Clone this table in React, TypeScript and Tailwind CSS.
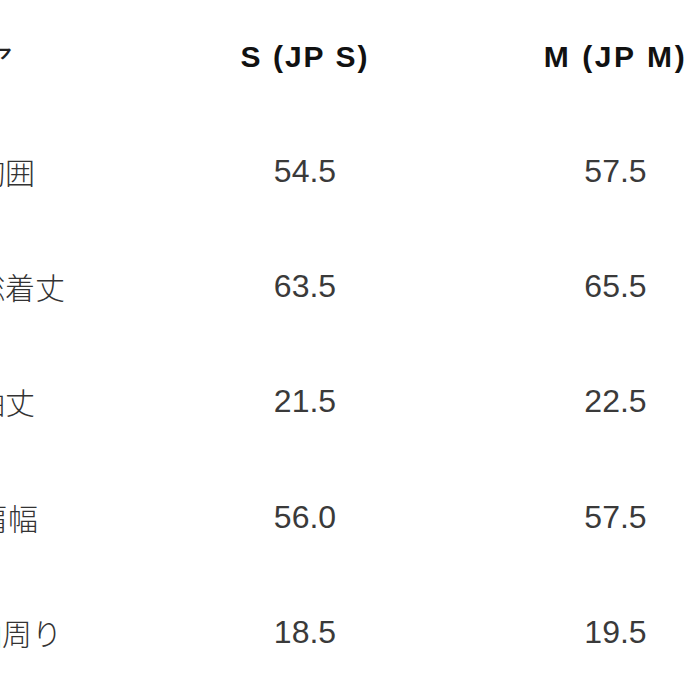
const rows = [
  { label: '胸囲', offset: 'ml-[-25px]', s: '54.5', m: '57.5' },
  { label: '総着丈', offset: 'ml-[-25px]', s: '63.5', m: '65.5' },
  { label: '袖丈', offset: 'ml-[-25px]', s: '21.5', m: '22.5' },
  { label: '肩幅', offset: 'ml-[-22px]', s: '56.0', m: '57.5' },
  { label: '袖周り', offset: 'ml-[-28px]', s: '18.5', m: '19.5' },
]

const jp = "font-['Noto_Sans_CJK_JP',sans-serif]"
const latin = "font-['Liberation_Sans',Arial,sans-serif]"

export default function App() {
  return (
    <div className="w-[699px] h-[699px] overflow-hidden bg-white">
      <div className="grid w-max grid-cols-[150px_310px_311px] grid-rows-[113px_repeat(5,115.4px)]">
        {/* header */}
        <div className="flex items-center whitespace-nowrap">
          <span className={`${jp} ml-[-166px] text-[30px] leading-none text-[#222]`}>サイズエリア</span>
        </div>
        <div className="flex items-center justify-center">
          <span className={`${latin} text-[30px] leading-none font-bold tracking-[2px] text-[#111] whitespace-pre`}>S (JP S)</span>
        </div>
        <div className="flex items-center justify-center">
          <span className={`${latin} text-[30px] leading-none font-bold tracking-[2.6px] text-[#111] whitespace-pre`}>M (JP M)</span>
        </div>

        {rows.map(r => (
          <div key={r.label} className="contents">
            <div className="flex items-center whitespace-nowrap">
              <span className={`${jp} ${r.offset} text-[30px] leading-none font-light text-[#333]`}>{r.label}</span>
            </div>
            <div className="flex items-center justify-center">
              <span className={`${latin} text-[32px] leading-none text-[#3a3a3a]`}>{r.s}</span>
            </div>
            <div className="flex items-center justify-center">
              <span className={`${latin} text-[32px] leading-none text-[#3a3a3a]`}>{r.m}</span>
            </div>
          </div>
        ))}
      </div>
    </div>
  )
}
